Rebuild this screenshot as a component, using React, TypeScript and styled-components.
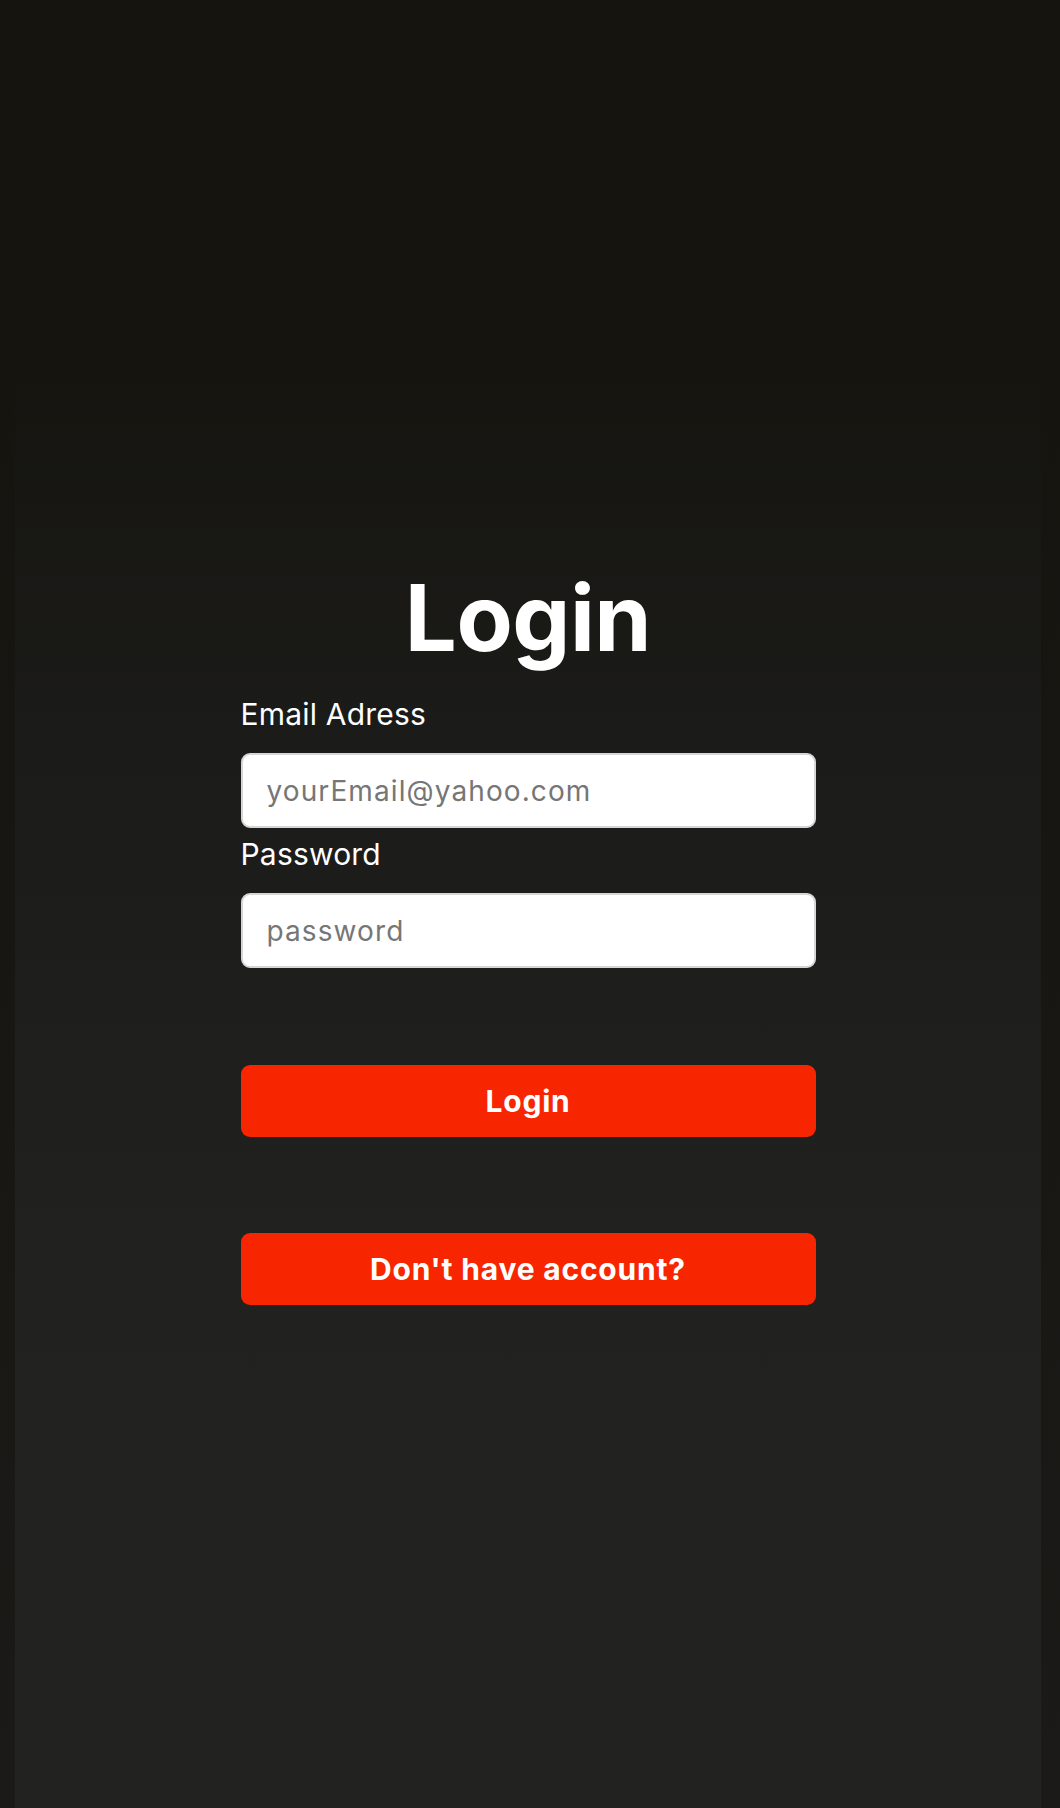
import { createGlobalStyle } from "styled-components";
import styled from "styled-components";

const GlobalStyle = createGlobalStyle`
  html, body {
    margin: 0;
    padding: 0;
  }
  body {
    background: linear-gradient(to bottom, #15140f 0, #15140f 360px, #1b1a18 100%);
    font-family: Inter, "Noto Sans", sans-serif;
    color: #ffffff;
  }
  * {
    box-sizing: border-box;
  }
`;

const Page = styled.div`
  min-height: 1808px;
  padding-top: 360px;
  display: flex;
  flex-direction: column;
`;

const Panel = styled.main`
  flex: 1;
  margin: 0 19px 0 15px;
  padding-top: 208px;
  background: linear-gradient(
    to bottom,
    rgba(24, 23, 19, 0) 0,
    #1b1b19 400px,
    #212120 900px,
    #222221 100%
  );
  display: flex;
  justify-content: center;
`;

const Form = styled.form`
  width: 575px;
  display: flex;
  flex-direction: column;
`;

const Title = styled.h1`
  margin: 0 0 28px;
  font-size: 92px;
  line-height: 100px;
  font-weight: 700;
  text-align: center;
  letter-spacing: -0.5px;
`;

const Label = styled.label<{ $gap?: number }>`
  display: block;
  margin-top: ${(p) => p.$gap ?? 0}px;
  font-size: 30px;
  line-height: 36px;
  font-weight: 400;
  letter-spacing: 0.2px;
`;

const Input = styled.input`
  margin-top: 21px;
  width: 100%;
  height: 75px;
  padding: 0 24px;
  border: 2px solid #d6d6d6;
  border-radius: 9px;
  background: #ffffff;
  font-family: inherit;
  font-size: 28px;
  letter-spacing: 1.1px;
  color: #222;
  outline: none;

  &::placeholder {
    color: #767676;
  }
`;

const Button = styled.button<{ $gap: number }>`
  margin-top: ${(p) => p.$gap}px;
  width: 100%;
  height: 72px;
  border: none;
  border-radius: 9px;
  background: #f72500;
  color: #ffffff;
  font-family: inherit;
  font-size: 30px;
  line-height: 36px;
  font-weight: 700;
  letter-spacing: 0.8px;
  cursor: pointer;
`;

export default function App() {
  return (
    <>
      <GlobalStyle />
      <Page>
        <Panel>
          <Form onSubmit={(e) => e.preventDefault()}>
            <Title>Login</Title>
            <Label htmlFor="email">Email Adress</Label>
            <Input id="email" type="email" placeholder="yourEmail@yahoo.com" />
            <Label htmlFor="password" $gap={8}>
              Password
            </Label>
            <Input id="password" type="password" placeholder="password" />
            <Button type="submit" $gap={97}>
              Login
            </Button>
            <Button type="button" $gap={96}>
              Don't have account?
            </Button>
          </Form>
        </Panel>
      </Page>
    </>
  );
}
